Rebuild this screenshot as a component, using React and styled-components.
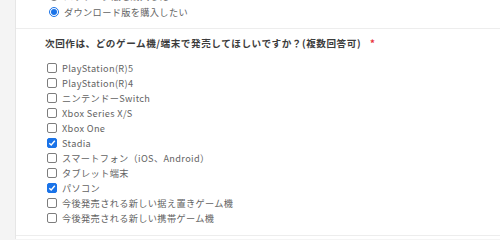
import React from "react";
import styled, { createGlobalStyle } from "styled-components";

const GlobalStyle = createGlobalStyle`
  body {
    margin: 0;
    background: #f4f4f4;
    font-family: "Noto Sans CJK JP", "Noto Sans", sans-serif;
    overflow: hidden;
  }
`;

const Page = styled.div`
  display: flex;
  height: 239px;
  overflow: hidden;
`;

const Gutter = styled.div`
  width: 15px;
  flex-shrink: 0;
  background: #f4f4f4;
  border-right: 1px solid #e6e6e6;
`;

const Panel = styled.div`
  flex: 1;
  background: #fff;
`;

const Section = styled.div`
  padding: ${(p) => p.$pad};
  border-bottom: 1px solid #ededed;
  margin-top: ${(p) => p.$top || "0"};
`;

const Heading = styled.div`
  height: 15px;
  line-height: 15px;
  font-size: 9.6px;
  font-weight: bold;
  letter-spacing: 0.55px;
  color: #3c3c3c;
  margin-bottom: 10px;
  white-space: nowrap;
`;

const Required = styled.span`
  color: #e8303c;
  margin-left: 9px;
`;

const List = styled.div`
  display: flex;
  flex-direction: column;
  gap: ${(p) => p.$gap || "0"};
  padding-left: 2px;
`;

const Row = styled.label`
  display: flex;
  align-items: center;
  height: 15px;
  gap: 5px;
  font-size: 9.2px;
  letter-spacing: 0.35px;
  color: #636363;
  white-space: nowrap;
`;

const Box = styled.span`
  width: 10px;
  height: 10px;
  box-sizing: border-box;
  border-radius: 2px;
  border: 1px solid ${(p) => (p.$on ? "#1a73e8" : "#7d7d7d")};
  background: ${(p) => (p.$on ? "#1a73e8" : "#fff")};
  display: flex;
  align-items: center;
  justify-content: center;
`;

const Radio = styled.span`
  width: 10px;
  height: 10px;
  box-sizing: border-box;
  border-radius: 50%;
  border: 1px solid ${(p) => (p.$on ? "#1a73e8" : "#7d7d7d")};
  display: flex;
  align-items: center;
  justify-content: center;
  &::after {
    content: "";
    width: 6px;
    height: 6px;
    border-radius: 50%;
    background: ${(p) => (p.$on ? "#1a73e8" : "transparent")};
  }
`;

const Check = () => (
  <svg width="8" height="8" viewBox="0 0 8 8">
    <path d="M1.3 4.2 L3.2 6 L6.8 1.8" fill="none" stroke="#fff" strokeWidth="1.4" />
  </svg>
);

const options = [
  ["PlayStation(R)5", false],
  ["PlayStation(R)4", false],
  ["ニンテンドーSwitch", false],
  ["Xbox Series X/S", false],
  ["Xbox One", false],
  ["Stadia", true],
  ["スマートフォン（iOS、Android）", false],
  ["タブレット端末", false],
  ["パソコン", true],
  ["今後発売される新しい据え置きゲーム機", false],
  ["今後発売される新しい携帯ゲーム機", false],
];

export default function App() {
  return (
    <>
      <GlobalStyle />
      <Page>
        <Gutter />
        <Panel>
          <Section $pad="0 0 8px 31px" $top="-11.5px">
            <List $gap="1px">
              <Row>
                <Radio />
                パッケージ版を購入したい
              </Row>
              <Row>
                <Radio $on />
                ダウンロード版を購入したい
              </Row>
            </List>
          </Section>
          <Section $pad="7px 0 9px 29px">
            <Heading>
              次回作は、どのゲーム機/端末で発売してほしいですか？(複数回答可)
              <Required>*</Required>
            </Heading>
            <List>
              {options.map(([label, on]) => (
                <Row key={label}>
                  <Box $on={on}>{on && <Check />}</Box>
                  {label}
                </Row>
              ))}
            </List>
          </Section>
        </Panel>
      </Page>
    </>
  );
}
